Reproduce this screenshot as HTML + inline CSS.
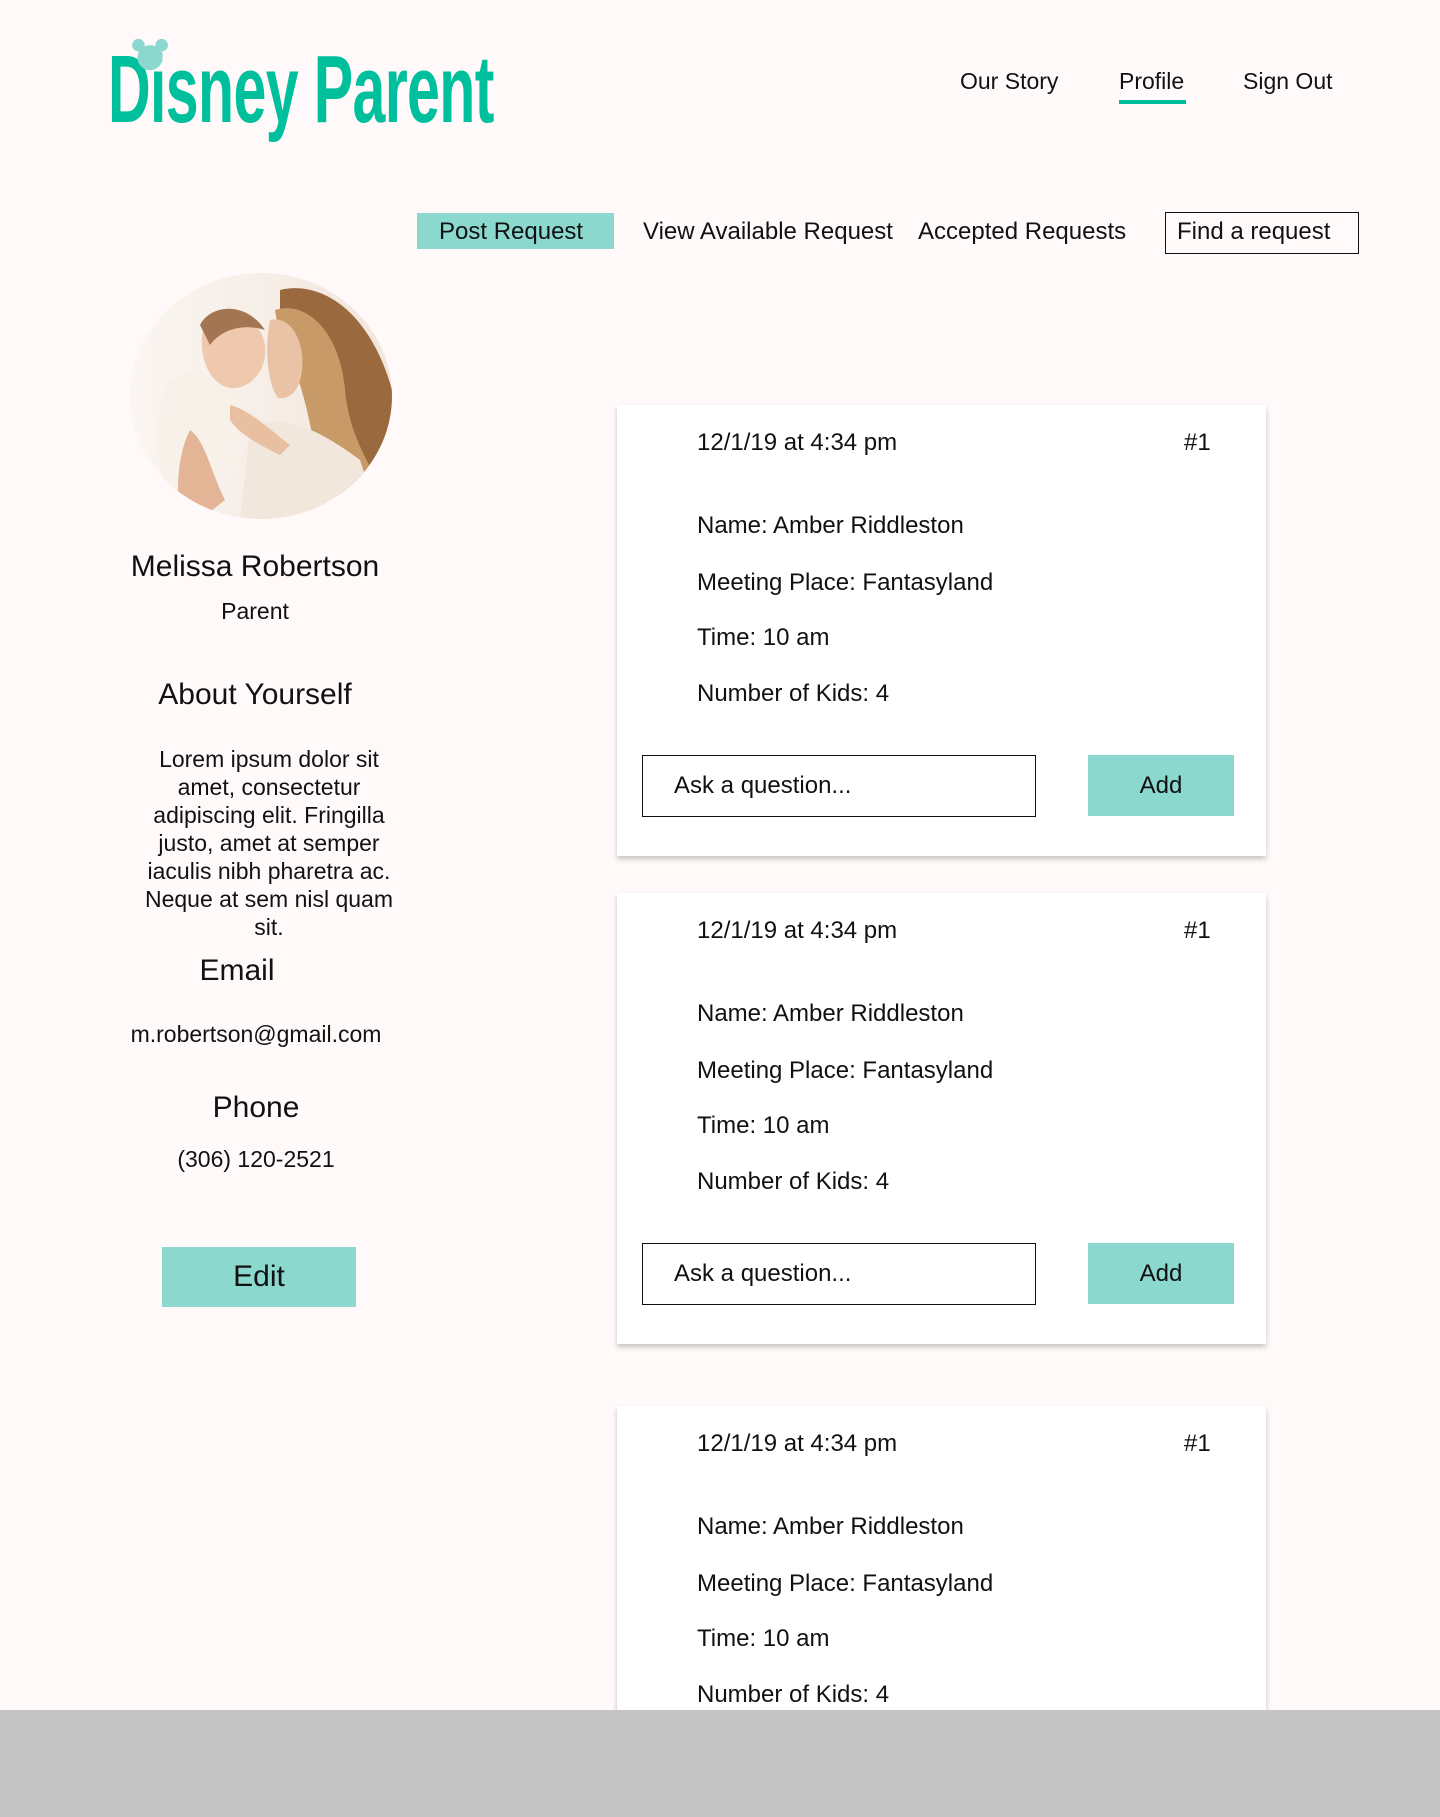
<!DOCTYPE html>
<html><head><meta charset="utf-8"><style>
*{margin:0;padding:0;box-sizing:border-box}
body{width:1440px;height:1817px;background:#fffaf9;font-family:"Liberation Sans",sans-serif;color:#111;position:relative;overflow:hidden}
.a{position:absolute;white-space:nowrap}
.c{transform:translateX(-50%)}
.logo{left:108px;top:42px;font-weight:bold;font-size:96px;color:#00bf9c;letter-spacing:-1px;transform:scaleX(0.615);transform-origin:left top;line-height:1}
.nav{font-size:23px;top:68px}
.sub{font-size:24px;top:218px}
.card{position:absolute;left:617px;width:649px;background:#fff;box-shadow:0 3px 5px rgba(0,0,0,.22)}
.card .t{position:absolute;left:80px;font-size:24px;transform:translateY(-50%)}
.inp{position:absolute;left:25px;width:394px;height:62px;border:1.5px solid #111;font-size:24px;padding-left:31px;line-height:59px}
.add{position:absolute;left:471px;width:146px;height:61px;background:#8bd8cf;font-size:24px;text-align:center;line-height:61px}
</style></head><body>
<div class="a logo">Disney Parent</div>
<svg class="a" style="left:130px;top:38px" width="40" height="34" viewBox="0 0 44 38"><circle cx="9" cy="8" r="7" fill="#8bd8cf"/><circle cx="35" cy="8" r="7" fill="#8bd8cf"/><circle cx="22" cy="22" r="14" fill="#8bd8cf"/></svg>
<div class="a nav" style="left:960px">Our Story</div>
<div class="a nav" style="left:1119px">Profile</div>
<div class="a" style="left:1119px;top:100px;width:67px;height:4px;background:#00bf9c"></div>
<div class="a nav" style="left:1243px">Sign Out</div>
<div class="a" style="left:417px;top:213px;width:197px;height:36px;background:#8bd8cf"></div>
<div class="a sub" style="left:439px">Post Request</div>
<div class="a sub" style="left:643px">View Available Request</div>
<div class="a sub" style="left:918px">Accepted Requests</div>
<div class="a" style="left:1165px;top:212px;width:194px;height:42px;border:1.5px solid #111"></div>
<div class="a sub" style="left:1177px">Find a request</div>

<svg class="a" style="left:130px;top:270px" width="264" height="250" viewBox="0 0 264 250">
<defs><clipPath id="cp"><ellipse cx="131" cy="126" rx="131" ry="123"/></clipPath>
<linearGradient id="bg" x1="0" x2="1"><stop offset="0" stop-color="#fbf6f2"/><stop offset="1" stop-color="#f1e6dc"/></linearGradient></defs>
<g clip-path="url(#cp)">
<rect width="264" height="250" fill="url(#bg)"/>
<path d="M150 20 C190 10 240 40 262 120 L262 250 L200 250 C230 180 210 80 150 45Z" fill="#9a6a3e"/>
<path d="M145 40 C175 30 210 60 215 120 C220 170 240 190 250 220 L190 200 C180 160 175 110 150 70Z" fill="#c79a68"/>
<path d="M140 50 C160 45 175 70 172 100 C170 120 160 130 148 128 C138 115 134 80 140 50Z" fill="#eac2a6"/>
<path d="M120 160 C150 140 190 160 230 190 L250 250 L110 250Z" fill="#f2e7dc"/>
<path d="M35 115 C50 95 90 95 105 120 L110 200 L40 230 C25 200 25 150 35 115Z" fill="#f7f1ea"/>
<path d="M75 50 C95 35 130 45 135 75 C138 100 120 120 100 118 C80 115 65 85 75 50Z" fill="#efc9ad"/>
<path d="M70 55 C80 35 115 30 135 60 C120 55 95 55 80 75Z" fill="#a37553"/>
<path d="M100 135 C120 140 140 160 160 175 L150 185 C130 175 110 165 100 150Z" fill="#e9bfa2"/>
<path d="M60 160 C75 170 80 200 95 230 L70 250 L50 250 C45 210 50 180 60 160Z" fill="#e3b495"/>
</g></svg>

<div class="a c" style="left:255px;top:550px;font-size:30px">Melissa Robertson</div>
<div class="a c" style="left:255px;top:598px;font-size:23px">Parent</div>
<div class="a c" style="left:255px;top:678px;font-size:30px">About Yourself</div>
<div class="a c" style="left:269px;top:745px;width:262px;font-size:23px;line-height:28px;text-align:center;white-space:normal">Lorem ipsum dolor sit amet, consectetur adipiscing elit. Fringilla justo, amet at semper iaculis nibh pharetra ac. Neque at sem nisl quam sit.</div>
<div class="a c" style="left:237px;top:954px;font-size:30px">Email</div>
<div class="a c" style="left:256px;top:1021px;font-size:23px">m.robertson@gmail.com</div>
<div class="a c" style="left:256px;top:1091px;font-size:30px">Phone</div>
<div class="a c" style="left:256px;top:1146px;font-size:23px">(306) 120-2521</div>
<div class="a" style="left:162px;top:1247px;width:194px;height:60px;background:#8bd8cf;font-size:30px;text-align:center;line-height:60px">Edit</div>

<div class="card" style="top:405px;height:451px">
<div class="t" style="top:38px">12/1/19 at 4:34 pm</div><div class="t" style="top:38px;left:567px">#1</div>
<div class="t" style="top:121px">Name: Amber Riddleston</div>
<div class="t" style="top:178px">Meeting Place: Fantasyland</div>
<div class="t" style="top:233px">Time: 10 am</div>
<div class="t" style="top:289px">Number of Kids: 4</div>
<div class="inp" style="top:350px">Ask a question...</div><div class="add" style="top:350px">Add</div>
</div>
<div class="card" style="top:893px;height:451px">
<div class="t" style="top:38px">12/1/19 at 4:34 pm</div><div class="t" style="top:38px;left:567px">#1</div>
<div class="t" style="top:121px">Name: Amber Riddleston</div>
<div class="t" style="top:178px">Meeting Place: Fantasyland</div>
<div class="t" style="top:233px">Time: 10 am</div>
<div class="t" style="top:289px">Number of Kids: 4</div>
<div class="inp" style="top:350px">Ask a question...</div><div class="add" style="top:350px">Add</div>
</div>
<div class="card" style="top:1406px;height:400px">
<div class="t" style="top:38px">12/1/19 at 4:34 pm</div><div class="t" style="top:38px;left:567px">#1</div>
<div class="t" style="top:121px">Name: Amber Riddleston</div>
<div class="t" style="top:178px">Meeting Place: Fantasyland</div>
<div class="t" style="top:233px">Time: 10 am</div>
<div class="t" style="top:289px">Number of Kids: 4</div>
</div>
<div class="a" style="left:0;top:1710px;width:1440px;height:107px;background:#c4c4c4"></div>
</body></html>
